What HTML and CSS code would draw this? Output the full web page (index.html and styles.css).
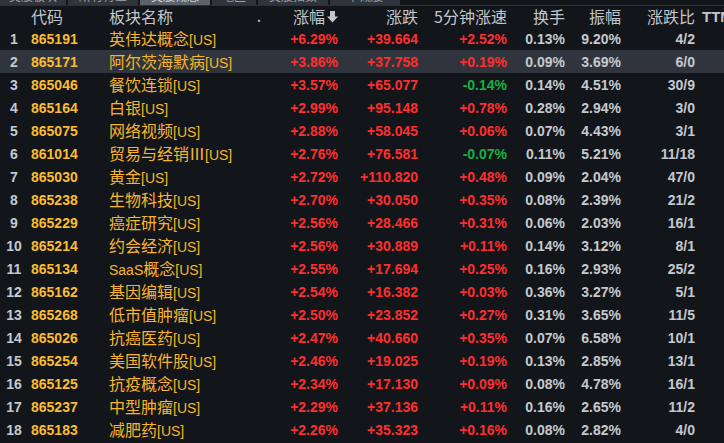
FILE: index.html
```html
<!DOCTYPE html>
<html lang="zh">
<head>
<meta charset="utf-8">
<link rel="stylesheet" href="styles.css">
</head>
<body>
<div class="app">
  <div class="tabs">
    <div class="tab t1"><span>美股板块</span></div>
    <div class="tab t2"><span>所有行业</span></div>
    <div class="tab t3 active"><span>美股概念</span></div>
    <div class="tab t4"><span>地区</span></div>
    <div class="tab t5"><span>美股指数</span></div>
    <div class="tab t6"><span>中概股</span></div>
  </div>
  <div class="table" id="table">
    <div class="row head">
      <div class="c num"></div>
      <div class="c code">代码</div>
      <div class="c name">板块名称</div>
      <div class="c dot">.</div>
      <div class="c r zf">涨幅<svg class="sort" width="11" height="12" viewBox="0 0 11 12"><rect x="3" y="0" width="5" height="6" fill="#c3c7cc"/><path d="M0 5.5 H11 L5.5 11.5 Z" fill="#c3c7cc"/></svg></div>
      <div class="c r zd">涨跌</div>
      <div class="c r sp">5分钟涨速</div>
      <div class="c r hs">换手</div>
      <div class="c r zf2">振幅</div>
      <div class="c r zdb">涨跌比</div>
      <div class="c ttm">TTM</div>
    </div>
  </div>
</div>
<script src="app.js"></script>
</body>
</html>
```
FILE: app.js
```js
var rows = [
["865191","英伟达概念[US]","+6.29%","+39.664","+2.52%","0.13%","9.20%","4/2"],
["865171","阿尔茨海默病[US]","+3.86%","+37.758","+0.19%","0.09%","3.69%","6/0"],
["865046","餐饮连锁[US]","+3.57%","+65.077","-0.14%","0.14%","4.51%","30/9"],
["865164","白银[US]","+2.99%","+95.148","+0.78%","0.28%","2.94%","3/0"],
["865075","网络视频[US]","+2.88%","+58.045","+0.06%","0.07%","4.43%","3/1"],
["861014","贸易与经销Ⅲ[US]","+2.76%","+76.581","-0.07%","0.11%","5.21%","11/18"],
["865030","黄金[US]","+2.72%","+110.820","+0.48%","0.09%","2.04%","47/0"],
["865238","生物科技[US]","+2.70%","+30.050","+0.35%","0.08%","2.39%","21/2"],
["865229","癌症研究[US]","+2.56%","+28.466","+0.31%","0.06%","2.03%","16/1"],
["865214","约会经济[US]","+2.56%","+30.889","+0.11%","0.14%","3.12%","8/1"],
["865134","SaaS概念[US]","+2.55%","+17.694","+0.25%","0.16%","2.93%","25/2"],
["865162","基因编辑[US]","+2.54%","+16.382","+0.03%","0.36%","3.27%","5/1"],
["865268","低市值肿瘤[US]","+2.50%","+23.852","+0.27%","0.31%","3.65%","11/5"],
["865026","抗癌医药[US]","+2.47%","+40.660","+0.35%","0.07%","6.58%","10/1"],
["865254","美国软件股[US]","+2.46%","+19.025","+0.19%","0.13%","2.85%","13/1"],
["865125","抗疫概念[US]","+2.34%","+17.130","+0.09%","0.08%","4.78%","16/1"],
["865237","中型肿瘤[US]","+2.29%","+37.136","+0.11%","0.16%","2.65%","11/2"],
["865183","减肥药[US]","+2.26%","+35.323","+0.16%","0.08%","2.82%","4/0"]
];
var t = document.getElementById('table');
rows.forEach(function (d, i) {
  var r = document.createElement('div');
  r.className = 'row' + (i === 1 ? ' sel' : '');
  function cell(cls, txt) {
    var c = document.createElement('div');
    c.className = 'c ' + cls;
    c.textContent = txt;
    r.appendChild(c);
    return c;
  }
  cell('num', String(i + 1));
  cell('code', d[0]);
  var n = cell('name', '');
  d[1].split(/([A-Za-z\[\]]+)/).forEach(function (part) {
    if (!part) return;
    var s = document.createElement('span');
    s.className = /^[A-Za-z\[\]]+$/.test(part) ? 'lat' : 'cjk';
    s.textContent = part;
    n.appendChild(s);
  });
  cell('dot', '');
  cell('r zf up', d[2]);
  cell('r zd up', d[3]);
  cell('r sp ' + (d[4].charAt(0) === '-' ? 'down' : 'up'), d[4]);
  cell('r hs gray', d[5]);
  cell('r zf2 gray', d[6]);
  cell('r zdb gray', d[7]);
  cell('ttm', '');
  t.appendChild(r);
});
```
FILE: styles.css
```css
html, body {
  margin: 0;
  padding: 0;
  background: #12161b;
  width: 724px;
  height: 443px;
  overflow: hidden;
}
.app {
  width: 724px;
  height: 443px;
  background: #12161b;
  font-family: "Liberation Sans", Arial, sans-serif;
}
.tabs {
  display: flex;
  height: 5px;
  border-bottom: 1px solid #2c3138;
  overflow: hidden;
}
.tab {
  height: 5px;
  background: #30353c;
  margin-right: 2px;
  overflow: hidden;
  display: flex;
  justify-content: center;
}
.tab span {
  display: block;
  font-family: "Noto Sans CJK SC", sans-serif;
  font-size: 12px;
  line-height: 12px;
  margin-top: -10px;
  color: #9aa0a7;
}
.tab.active { background: #5d636b; }
.tab.active span { color: #d0d3d6; }
.t1 { width: 66px; }
.t2 { width: 70px; }
.t3 { width: 70px; }
.t4 { width: 44px; }
.t5 { width: 70px; }
.t6 { width: 70px; }

.table {
  display: flex;
  flex-direction: column;
}
.row {
  display: grid;
  grid-template-columns: 28px 81px 140px 20px 69px 80px 89px 58px 56px 74px 29px;
  height: 23px;
  align-items: center;
  font-weight: bold;
  font-size: 14px;
  line-height: 23px;
  white-space: nowrap;
}
.row.head {
  height: 21px;
  line-height: 21px;
  font-weight: normal;
  font-family: "Noto Sans CJK SC", sans-serif;
  font-size: 16px;
  color: #c3c7cc;
}
.row.sel { background: #30353d; }
.c { overflow: visible; }
.r { text-align: right; }
.num {
  text-align: center;
  color: #c5c9ce;
  font-weight: bold;
}
.code {
  padding-left: 3px;
  color: #fbbd2f;
}
.row.head .code { color: #c3c7cc; }
.name {
  font-family: "Noto Sans CJK SC", sans-serif;
  font-weight: normal;
  font-size: 16px;
  color: #f7b52c;
}
.name .lat {
  font-family: "Liberation Sans", Arial, sans-serif;
  font-size: 14px;
}
.row.head .name { color: #c3c7cc; }
.dot {
  font-weight: bold;
  text-align: center;
  font-size: 12px;
}
.zf { display: flex; justify-content: flex-end; align-items: center; gap: 2px; }
.sort { display: block; }
.up { color: #ff2e2e; }
.down { color: #16b043; }
.gray { color: #c5c9ce; }
.ttm {
  padding-left: 7px;
  overflow: hidden;
  font-family: "Liberation Sans", Arial, sans-serif;
  font-weight: bold;
  font-size: 15px;
}
.row.head .zf, .row.head .ttm { color: #c3c7cc; }
```
